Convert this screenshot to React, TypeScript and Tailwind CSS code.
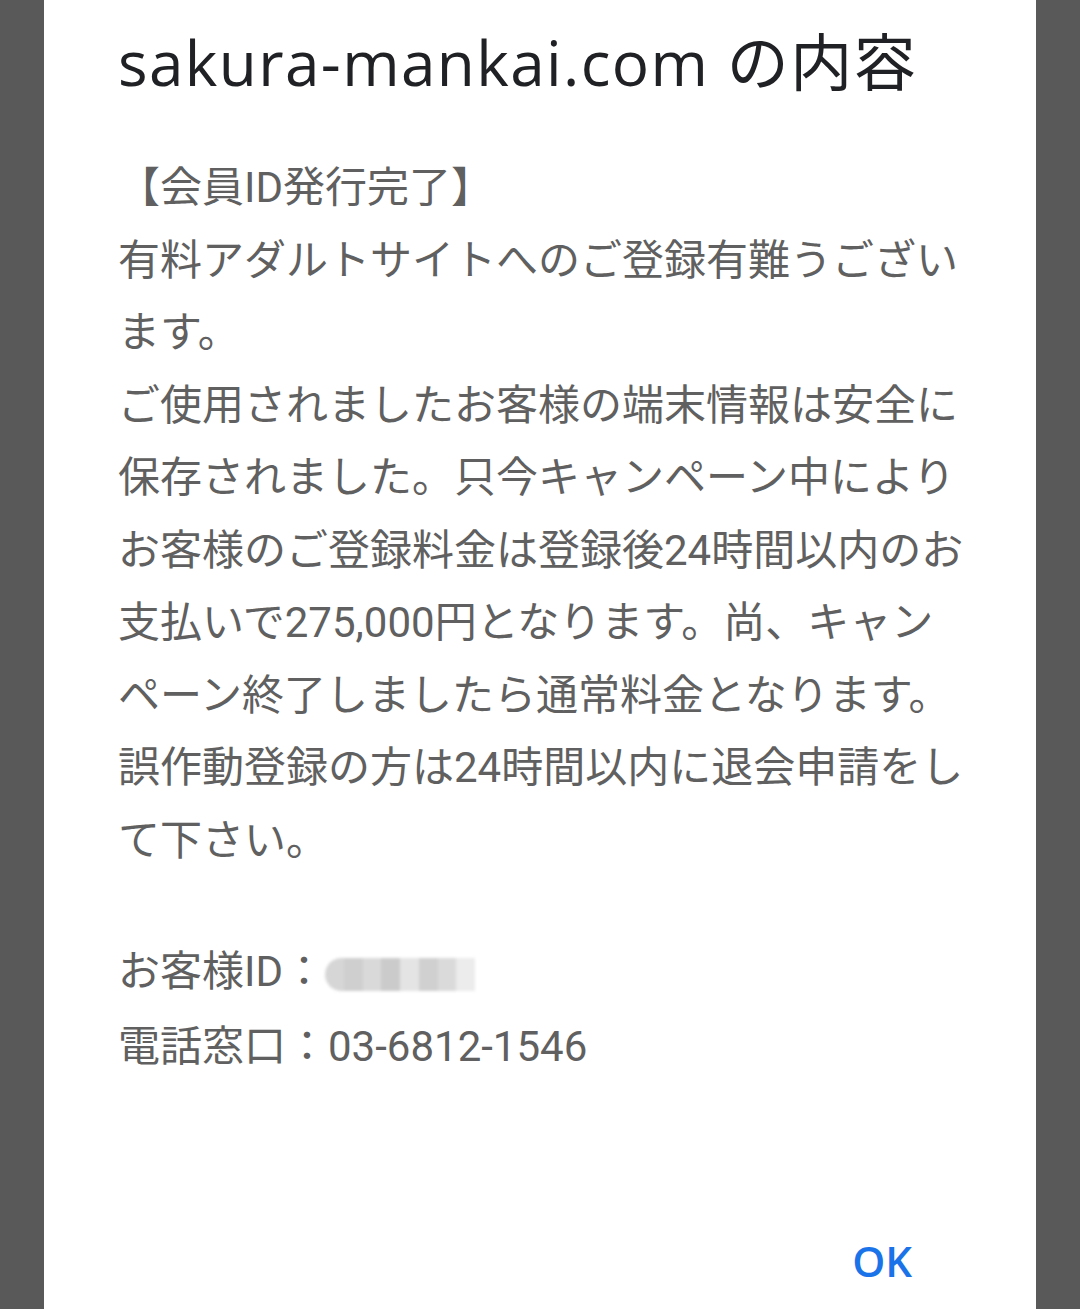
import React from 'react'

const BODY_LINES = [
  '【会員ID発行完了】',
  '有料アダルトサイトへのご登録有難うござい',
  'ます。',
  'ご使用されましたお客様の端末情報は安全に',
  '保存されました。只今キャンペーン中により',
  'お客様のご登録料金は登録後24時間以内のお',
  '支払いで275,000円となります。尚、キャン',
  'ペーン終了しましたら通常料金となります。',
  '誤作動登録の方は24時間以内に退会申請をし',
  'て下さい。',
]

// pixelated/blurred customer id
const MOSAIC = ['#d6d6d6', '#cfcfcf', '#d9d9d9', '#cbcbcb', '#e4e4e4', '#d0d0d0', '#dadada', '#ececec']

function BlurredId() {
  return (
    <span className="inline-flex h-[33px] w-[150px] align-middle blur-[1.5px] rounded-l-full overflow-hidden">
      {MOSAIC.map((c, i) => (
        <span key={i} className="flex-1 h-full" style={{ background: c }} />
      ))}
    </span>
  )
}

export default function App() {
  return (
    <div className="w-[1080px] h-[1309px] bg-[#595959] flex justify-center overflow-hidden">
      <div className="w-[992px] h-full bg-white flex flex-col pl-[74px] pr-[60px] pt-[20px]">
        <h1
          className="text-[62px] leading-[84px] text-[#202124] tracking-[1.4px] whitespace-nowrap"
          style={{ fontFamily: '"Open Sans", "Noto Sans CJK JP", sans-serif' }}
        >
          sakura-mankai.com の内容
        </h1>

        <div
          className="mt-[48px] text-[42px] leading-[72.5px] text-[#606060] whitespace-nowrap"
          style={{ fontFamily: 'Roboto, "Noto Sans CJK JP", sans-serif' }}
        >
          <p>
            {BODY_LINES.map((l, i) => (
              <React.Fragment key={i}>
                {l}
                {i < BODY_LINES.length - 1 && <br />}
              </React.Fragment>
            ))}
          </p>
          <p className="mt-[57px] leading-[75px]">
            お客様ID：<BlurredId />
            <br />
            電話窓口：03-6812-1546
          </p>
        </div>

        <div className="mt-auto mb-[20px] flex justify-end pr-[64px]">
          <button
            className="text-[42px] font-semibold text-[#1a73e8] leading-[56px]"
            style={{ fontFamily: '"Open Sans", sans-serif' }}
          >
            OK
          </button>
        </div>
      </div>
    </div>
  )
}
